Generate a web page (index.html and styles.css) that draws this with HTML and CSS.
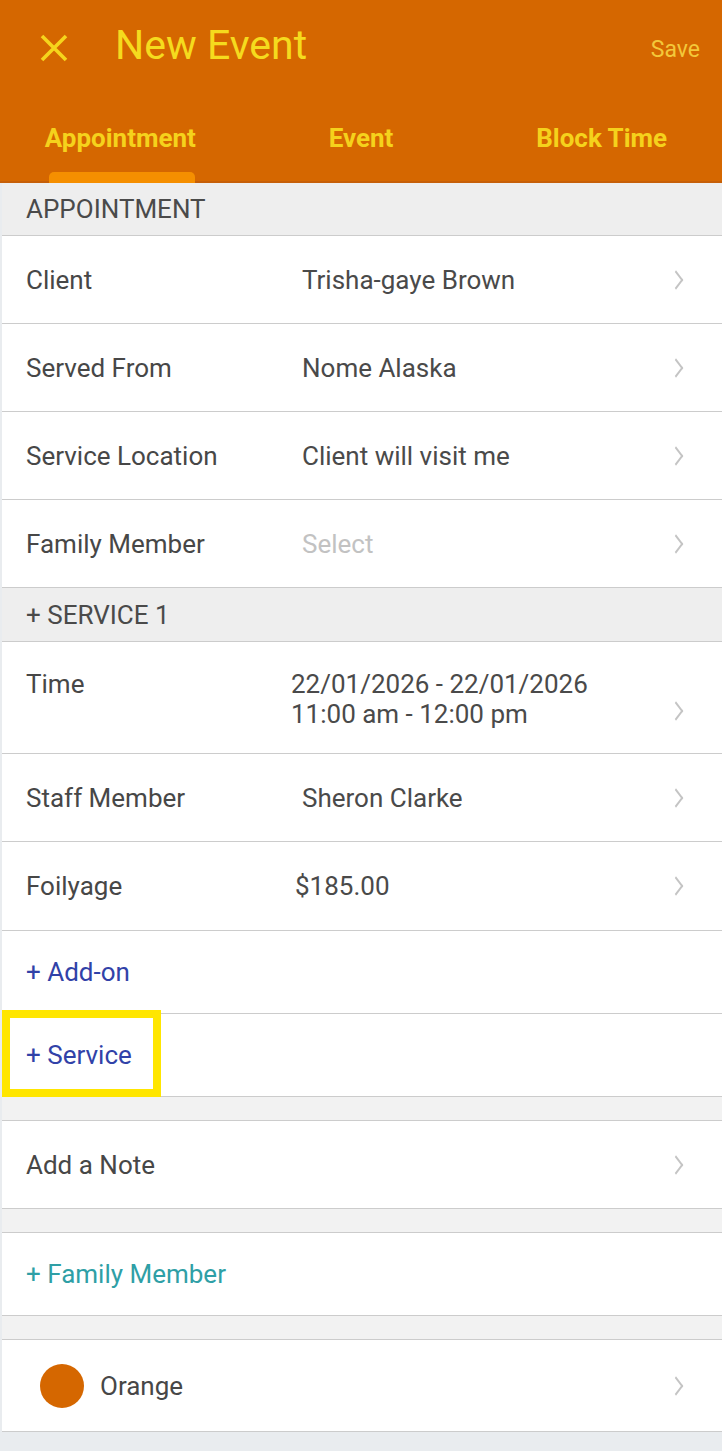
FILE: index.html
```html
<!DOCTYPE html>
<html lang="en">
	<head>
		<meta charset="UTF-8" />
		<meta name="viewport" content="width=device-width, initial-scale=1.0" />
		<title>New Event</title>
		<link rel="stylesheet" href="styles.css">
	</head>
	<body>
		<header class="appbar">
			<div class="topbar">
				<button class="close-btn" aria-label="Close">
					<svg width="28" height="28" viewBox="0 0 28 28">
						<path d="M2 2 L26 26 M26 2 L2 26" stroke="#f5d51c" stroke-width="3.6" stroke-linecap="butt" fill="none" />
					</svg>
				</button>
				<h1 class="title">New Event</h1>
				<span class="save">Save</span>
			</div>
			<nav class="tabs">
				<div class="tab active">Appointment</div>
				<div class="tab">Event</div>
				<div class="tab">Block Time</div>
			</nav>
		</header>

		<main class="form">
			<div class="section-head">APPOINTMENT</div>

			<div class="row">
				<span class="label">Client</span>
				<span class="value">Trisha-gaye Brown</span>
				<span class="chevron"></span>
			</div>
			<div class="row">
				<span class="label">Served From</span>
				<span class="value">Nome Alaska</span>
				<span class="chevron"></span>
			</div>
			<div class="row">
				<span class="label">Service Location</span>
				<span class="value">Client will visit me</span>
				<span class="chevron"></span>
			</div>
			<div class="row">
				<span class="label">Family Member</span>
				<span class="value placeholder">Select</span>
				<span class="chevron"></span>
			</div>

			<div class="section-head section-service">+ SERVICE 1</div>

			<div class="row row-time">
				<span class="label">Time</span>
				<span class="value value-time">22/01/2026 - 22/01/2026<br>11:00 am - 12:00 pm</span>
				<span class="chevron"></span>
			</div>
			<div class="row">
				<span class="label">Staff Member</span>
				<span class="value">Sheron Clarke</span>
				<span class="chevron"></span>
			</div>
			<div class="row row-price">
				<span class="label">Foilyage</span>
				<span class="value value-price">$185.00</span>
				<span class="chevron"></span>
			</div>

			<div class="row row-link">
				<span class="link">+ Add-on</span>
			</div>
			<div class="row row-link">
				<span class="link">+ Service</span>
				<span class="highlight-box"></span>
			</div>

			<div class="gap"></div>

			<div class="row row-note">
				<span class="label">Add a Note</span>
				<span class="value"></span>
				<span class="chevron"></span>
			</div>

			<div class="gap"></div>

			<div class="row row-link">
				<span class="link link-teal">+ Family Member</span>
			</div>

			<div class="gap"></div>

			<div class="row row-color">
				<span class="swatch"></span>
				<span class="color-name">Orange</span>
				<span class="chevron"></span>
			</div>
		</main>
	</body>
</html>
```

FILE: styles.css
```css
body {
	margin: 0;
	font-family: Roboto, 'Noto Sans', sans-serif;
	background-color: #e9ecef;
	color: #474747;
}
.appbar {
	background-color: #d56700;
	height: 183px;
	box-sizing: border-box;
	border-bottom: 2px solid #c65f08;
	display: flex;
	flex-direction: column;
}
.topbar {
	height: 90px;
	display: flex;
	align-items: center;
	padding: 0 22px 0 40px;
}
.close-btn {
	background: none;
	border: none;
	padding: 0;
	width: 28px;
	height: 28px;
	margin-top: 6px;
	cursor: pointer;
}
.title {
	margin: 0 0 0 47px;
	font-size: 41px;
	font-weight: 400;
	color: #f5db1e;
	flex: 1;
}
.save {
	font-size: 23px;
	color: #f3c83a;
	margin-top: 8px;
}
.tabs {
	flex: 1;
	display: grid;
	grid-template-columns: 1fr 1fr 1fr;
}
.tab {
	position: relative;
	text-align: center;
	font-size: 26px;
	font-weight: 700;
	color: #f5d21c;
	padding-top: 33px;
}
.tab.active::after {
	content: '';
	position: absolute;
	left: 49px;
	width: 146px;
	bottom: -2px;
	height: 11px;
	border-radius: 5px 5px 0 0;
	background-color: #f58f00;
}
.form {
	margin-left: 2px;
	background-color: #fff;
}
.section-head {
	background-color: #eeeeee;
	height: 52px;
	border-bottom: 1px solid #cccccc;
	display: flex;
	align-items: center;
	padding-left: 24px;
	font-size: 26px;
	color: #4a4a4a;
}
.section-service {
	height: 53px;
}
.row {
	position: relative;
	display: flex;
	align-items: center;
	height: 87px;
	border-bottom: 1px solid #cccccc;
	background-color: #fff;
	padding-left: 24px;
	font-size: 26px;
}
.label {
	width: 276px;
	flex-shrink: 0;
	color: #474747;
}
.value {
	flex: 1;
	color: #4a4a4a;
}
.placeholder {
	color: #c2c2c2;
}
.row-time {
	height: 112px;
	align-items: flex-start;
	box-sizing: border-box;
	padding-top: 27px;
}
.row-time .chevron {
	align-self: center;
}
.value-time {
	margin-left: -11px;
	line-height: 30px;
}
.row-time .label {
	line-height: 30px;
}
.row-price {
	height: 88px;
}
.value-price {
	margin-left: -7px;
}
.chevron {
	width: 10px;
	height: 10px;
	margin-right: 40px;
	border-top: 2px solid #c4c4c4;
	border-right: 2px solid #c4c4c4;
	transform: rotate(45deg) skew(8deg, 8deg);
}
.row-link {
	height: 82px;
}
.row-note {
	height: 87px;
}
.link {
	color: #3142a8;
}
.link-teal {
	color: #2f9fa6;
}
.highlight-box {
	position: absolute;
	left: 0;
	top: -4px;
	width: 159px;
	height: 87px;
	box-sizing: border-box;
	border: 8px solid #ffe600;
}
.gap {
	height: 23px;
	background-color: #f2f2f2;
	border-bottom: 1px solid #cccccc;
}
.row-color {
	height: 91px;
	padding-left: 38px;
}
.swatch {
	width: 44px;
	height: 44px;
	border-radius: 50%;
	background-color: #d56700;
	flex-shrink: 0;
}
.color-name {
	flex: 1;
	margin-left: 16px;
	color: #474747;
}
```
